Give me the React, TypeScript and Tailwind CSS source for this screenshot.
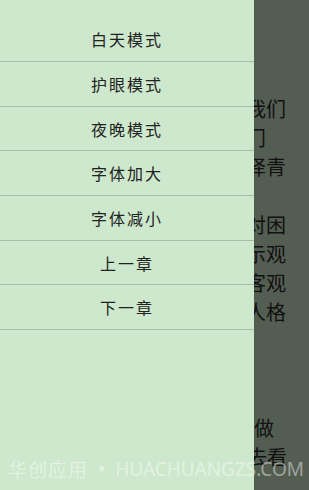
import React from 'react'

const menu = [
  { label: '白天模式', h: 'h-[45px]' },
  { label: '护眼模式', h: 'h-[45px]' },
  { label: '夜晚模式', h: 'h-[44px]' },
  { label: '字体加大', h: 'h-[45px]' },
  { label: '字体减小', h: 'h-[45px]' },
  { label: '上一章', h: 'h-[44px]' },
  { label: '下一章', h: 'h-[45px]' },
]

// lines of the chapter text behind the drawer; only their ends show
const page = [
  { t: '', pr: 'pr-[23px]' },
  { t: '', pr: 'pr-[23px]' },
  { t: '', pr: 'pr-[23px]' },
  { t: '我们', pr: 'pr-[23px]' },
  { t: '门', pr: 'pr-[43px]' },
  { t: '译青', pr: 'pr-[23px]' },
  { t: '', pr: 'pr-[23px]' },
  { t: '对困', pr: 'pr-[23px]' },
  { t: '示观', pr: 'pr-[23px]' },
  { t: '客观', pr: 'pr-[23px]' },
  { t: '人格', pr: 'pr-[23px]' },
  { t: '', pr: 'pr-[23px]' },
  { t: '', pr: 'pr-[23px]' },
  { t: '', pr: 'pr-[23px]' },
  { t: '做', pr: 'pr-[35px]' },
  { t: '去看', pr: 'pr-[22px]' },
]

export default function App() {
  return (
    <div className="relative w-[309px] h-[490px] overflow-hidden bg-[#535d51] font-['Noto_Sans_CJK_SC',sans-serif]">
      {/* dimmed reader page */}
      <div className="flex flex-col pt-[7px]">
        {page.map((l, i) => (
          <div key={i} className={`flex justify-end h-[29px] items-center text-[20px] text-[#111] ${l.pr}`}>
            {l.t}
          </div>
        ))}
      </div>

      {/* drawer */}
      <div className="absolute inset-y-0 left-0 w-[254px] bg-[#cde8cc] pt-[17px]">
        {menu.map((m) => (
          <div
            key={m.label}
            className={`flex items-center justify-center border-b border-[#a9bea8] text-[16px] tracking-[2px] text-[#222] ${m.h}`}
          >
            {m.label}
          </div>
        ))}
      </div>

      {/* watermark */}
      <div className="absolute left-[8px] bottom-[7px] flex items-center gap-[10px] whitespace-nowrap text-[19px] text-white/45 font-['Noto_Sans',sans-serif]">
        <span className="font-['Noto_Sans_CJK_SC',sans-serif] tracking-[1px]">华创应用</span>
        <span>•</span>
        <span>HUACHUANGZS.COM</span>
      </div>
    </div>
  )
}
